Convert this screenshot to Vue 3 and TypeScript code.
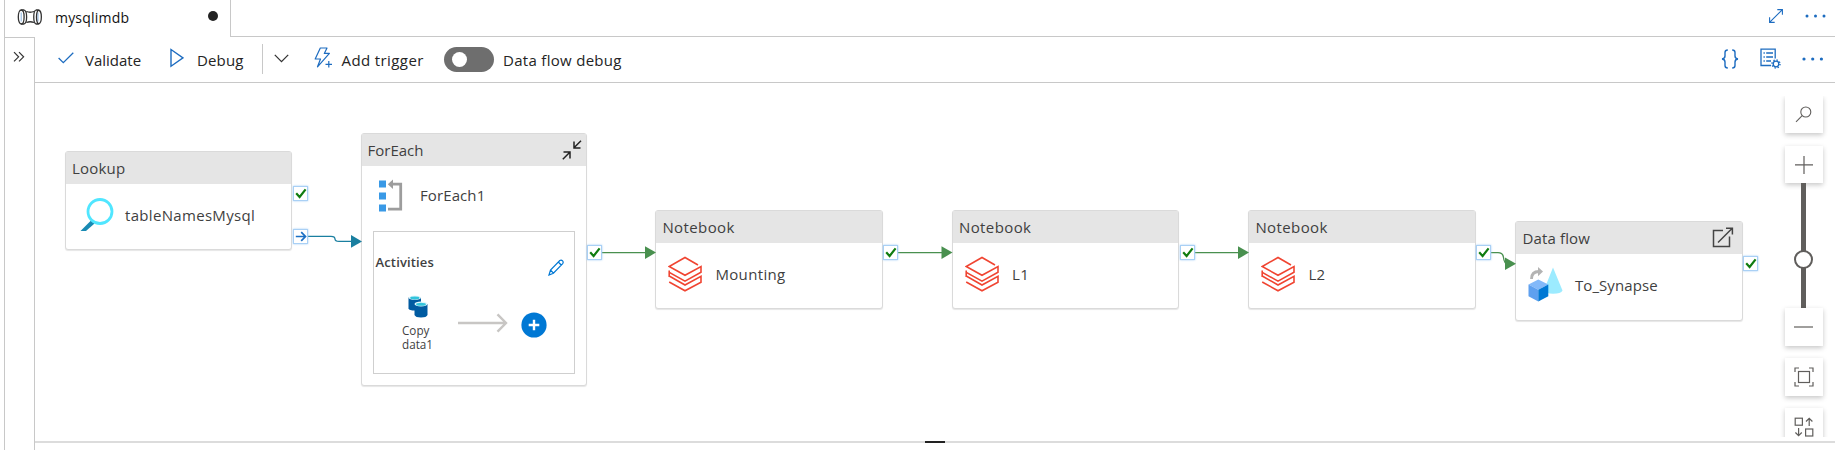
<script setup lang="ts">
type Kind = 'lookup' | 'foreach' | 'notebook' | 'dataflow'

interface Activity {
  id: number
  kind: Kind
  type: string
  name: string
  x: number
  y: number
  w: number
  h: number
}

interface Port {
  x: number
  y: number
  kind: 'success' | 'completion'
}

interface Link {
  d: string
  tipX: number
  tipY: number
  color: string
}

const activities: Activity[] = [
  { id: 1, kind: 'lookup', type: 'Lookup', name: 'tableNamesMysql', x: 30, y: 68.4, w: 227, h: 99 },
  { id: 2, kind: 'foreach', type: 'ForEach', name: 'ForEach1', x: 326, y: 50, w: 226, h: 253 },
  { id: 3, kind: 'notebook', type: 'Notebook', name: 'Mounting', x: 620.4, y: 127, w: 227.4, h: 99 },
  { id: 4, kind: 'notebook', type: 'Notebook', name: 'L1', x: 917, y: 127, w: 227.4, h: 99 },
  { id: 5, kind: 'notebook', type: 'Notebook', name: 'L2', x: 1213.4, y: 127, w: 227.4, h: 99 },
  { id: 6, kind: 'dataflow', type: 'Data flow', name: 'To_Synapse', x: 1480.4, y: 138, w: 227.4, h: 99.5 },
]

const ports: Port[] = [
  { x: 258, y: 103, kind: 'success' },
  { x: 258, y: 146, kind: 'completion' },
  { x: 552, y: 162, kind: 'success' },
  { x: 848.4, y: 162, kind: 'success' },
  { x: 1145, y: 162, kind: 'success' },
  { x: 1441.4, y: 162, kind: 'success' },
  { x: 1708.4, y: 173, kind: 'success' },
]

const teal = '#1a7fa0'
const green = '#49904f'

const links: Link[] = [
  { d: 'M273 153.3 H296 Q300 153.3 300 156 Q300 158.4 304 158.4 H317', tipX: 327, tipY: 158.4, color: teal },
  { d: 'M567 169.6 H612', tipX: 621, tipY: 169.6, color: green },
  { d: 'M863 169.6 H908', tipX: 917.5, tipY: 169.6, color: green },
  { d: 'M1160 169.6 H1205', tipX: 1214, tipY: 169.6, color: green },
  { d: 'M1456 169.6 H1463 Q1468 169.6 1468.5 174.5 Q1469 180.5 1473 181', tipX: 1481, tipY: 180.8, color: green },
]

const tip = (l: Link): string =>
  `M${l.tipX} ${l.tipY} l-11 -6.3 v12.6 z`
</script>

<template>
  <div class="app">
    <header class="tabs">
      <div class="tab">
        <svg class="pipe" width="26" height="18" viewBox="0 0 26 18">
          <path d="M4.2 4.5 V13.5 M21 4.5 V13.5" stroke="#8ab4e0" stroke-width="1" />
          <g fill="none" stroke="#333" stroke-width="1.3">
            <ellipse cx="4.2" cy="9" rx="2.9" ry="7" />
            <path d="M4.2 2 H7 C10.5 3 10.5 15 7 16 H4.2 M9.5 3.5 Q13 5 17 3.5 M9.5 14.5 Q13 13 17 14.5" />
            <path d="M19 2 C16 3 16 15 19 16 H21.5 M19 2 H21.5 C25.3 3 25.3 15 21.5 16 C18.8 14 18.8 4 21.5 2" />
          </g>
        </svg>
        <span class="tab-title">mysqlimdb</span>
        <span class="dirty"></span>
      </div>
      <div class="tab-tools">
        <svg width="16" height="16" viewBox="0 0 16 16" fill="none" stroke="#1d6cc0" stroke-width="1.1">
          <path d="M1.8 14.2 L14.2 1.8 M9.3 1.6 H14.4 V6.7 M1.6 9.3 V14.4 H6.7" />
        </svg>
        <svg width="22" height="4" viewBox="0 0 22 4" fill="#1d6cc0">
          <circle cx="2" cy="2" r="1.5" /><circle cx="10.5" cy="2" r="1.5" /><circle cx="19" cy="2" r="1.5" />
        </svg>
      </div>
    </header>

    <div class="body">
      <aside class="rail">
        <svg width="12" height="12" viewBox="0 0 12 12" fill="none" stroke="#333" stroke-width="1.2">
          <path d="M1 1.2 L5.6 5.8 L1 10.4 M6 1.2 L10.6 5.8 L6 10.4" />
        </svg>
      </aside>

      <main class="main">
        <div class="toolbar">
          <button class="cmd validate">
            <svg width="16" height="12" viewBox="0 0 16 12" fill="none" stroke="#1d6cc0" stroke-width="1.3">
              <path d="M.6 6 L5.3 10.6 L15.3 .7" />
            </svg>
            <span>Validate</span>
          </button>
          <button class="cmd debug">
            <svg width="14" height="20" viewBox="0 0 14 20" fill="none" stroke="#1d6cc0" stroke-width="1.4">
              <path d="M1 1.5 V18.2 L13 9.8 Z" />
            </svg>
            <span>Debug</span>
          </button>
          <span class="sep"></span>
          <svg class="chev" width="15" height="9" viewBox="0 0 15 9" fill="none" stroke="#333" stroke-width="1.3">
            <path d="M.8 .9 L7.5 7.6 L14.2 .9" />
          </svg>
          <button class="cmd trigger">
            <svg width="19" height="21" viewBox="0 0 19 21" fill="none" stroke="#1d6cc0" stroke-width="1.2">
              <path d="M6.3 1 H13 L10.3 6.4 H15.4 L3.5 19.8 L6.5 12 H1.2 Z" stroke-linejoin="round" />
              <path d="M14.8 14 V20.5 M11.5 17.3 H18" />
            </svg>
            <span>Add trigger</span>
          </button>
          <span class="toggle"><i></i></span>
          <span class="toggle-label">Data flow debug</span>
          <div class="right-tools">
            <svg width="18" height="20" viewBox="0 0 18 20" fill="none" stroke="#1d6cc0" stroke-width="1.4">
              <path d="M6.8 1 Q4 1 4 3.5 V7 Q4 9.7 1 10 Q4 10.3 4 13 V16.5 Q4 19 6.8 19 M11.2 1 Q14 1 14 3.5 V7 Q14 9.7 17 10 Q14 10.3 14 13 V16.5 Q14 19 11.2 19" />
            </svg>
            <svg width="21" height="21" viewBox="0 0 21 21" fill="none" stroke="#1d6cc0" stroke-width="1.3">
              <path d="M11 17.5 H1 V1.1 H15.2 V10.5" />
              <path d="M3.5 5 H4.8 M6.2 5 H13 M3.5 9 H4.8 M6.2 9 H13 M3.5 13 H4.8 M6.2 13 H11" />
              <circle cx="16" cy="16" r="2.8" />
              <circle cx="16" cy="16" r="4" stroke-width="1.4" stroke-dasharray="1.4 1.74" />
            </svg>
            <svg width="22" height="4" viewBox="0 0 22 4" fill="#1d6cc0">
              <circle cx="2" cy="2" r="1.6" /><circle cx="10.7" cy="2" r="1.6" /><circle cx="19.4" cy="2" r="1.6" />
            </svg>
          </div>
        </div>

        <section class="canvas">
          <article
            v-for="a in activities"
            :key="a.id"
            class="node"
            :class="a.kind"
            :style="{ left: a.x + 'px', top: a.y + 'px', width: a.w + 'px', height: a.h + 'px' }"
          >
            <div class="node-head">
              <span class="type">{{ a.type }}</span>
              <svg v-if="a.kind === 'foreach'" class="collapse" width="20" height="20" viewBox="0 0 20 20" fill="none" stroke="#222" stroke-width="1.5">
                <path d="M19 .8 L12 7.8 M12 1.5 V8 H18.5 M.8 19.2 L7.8 12.2 M1.5 12 H8 V18.5" />
              </svg>
              <svg v-if="a.kind === 'dataflow'" class="open" width="22" height="21" viewBox="0 0 22 21" fill="none" stroke="#444" stroke-width="1.5">
                <path d="M11 3.5 H1.5 V19.5 H17.5 V9.5 M6 15.5 L20 1.5 M14 1.2 H20.4 V7.6" />
              </svg>
            </div>

            <div class="node-body">
              <svg v-if="a.kind === 'lookup'" class="glyph" width="34" height="34" viewBox="0 0 34 34">
                <path d="M.5 33 L11 22.5 L14.5 25.5 L6 33 Z" fill="#198ab3" />
                <circle cx="20" cy="13.5" r="12" fill="#fff" stroke="#50e6ff" stroke-width="2.8" />
              </svg>
              <svg v-else-if="a.kind === 'foreach'" class="glyph" width="26" height="34" viewBox="0 0 26 34">
                <path d="M1 1.5 h7 v7 h-7 z M1 13.5 h7 v7 h-7 z M1 25.5 h7 v7 h-7 z" fill="#3999e6" />
                <path d="M14 5.2 H22.7 V30.2 H10" fill="none" stroke="#9d9d9d" stroke-width="2.8" />
                <path d="M9.8 5.2 L15 .5 V10 Z" fill="#9d9d9d" />
              </svg>
              <svg v-else-if="a.kind === 'notebook'" class="glyph" width="34" height="36" viewBox="0 0 34 36" fill="none" stroke="#f04532" stroke-width="1.6">
                <path d="M30 9 L17 1.5 L1.2 10.5 L17 19.3 L33 10.5 V16.3 L17 25.2 L1.2 16.3 V20 L17 29 L33 20.3 V26.3 L17 34.8 L1.2 26 M1.2 14.5 V21" />
              </svg>
              <svg v-else class="glyph" width="35" height="35" viewBox="0 0 35 35">
                <path d="M25 .5 L34.5 23.5 Q33 26.7 25 26.7 Q17.5 26.5 16 23 Z" fill="#9cebff" />
                <path d="M3.5 12 Q3.5 4.5 11 4.5" fill="none" stroke="#b3b3b3" stroke-width="2.8" />
                <path d="M10 0 L15 4.6 L10 9.2 Z" fill="#b3b3b3" />
                <path d="M.5 17.5 L10.3 12.5 L20.3 17.5 L10.3 22.8 Z" fill="#83b9f9" />
                <path d="M.5 17.5 L10.3 22.8 V34.5 L.5 29.3 Z" fill="#5ea0ef" />
                <path d="M20.3 17.5 L10.3 22.8 V34.5 L20.3 29.3 Z" fill="#0078d4" />
              </svg>
              <span class="name">{{ a.name }}</span>
            </div>

            <div v-if="a.kind === 'foreach'" class="inner">
              <div class="inner-head">
                <span>Activities</span>
                <svg width="16" height="17" viewBox="0 0 16 17" fill="none" stroke="#0078d4" stroke-width="1.2">
                  <path d="M1 16 L2.5 11 L11.8 1.5 Q13.3 .6 14.6 1.9 Q15.7 3.2 14.7 4.6 L5.4 14.2 Z M10.3 3 L13.2 6 M2.5 11 L5.4 14.2" />
                </svg>
              </div>
              <div class="inner-row">
                <div class="copy">
                  <svg width="20" height="23" viewBox="0 0 20 23">
                    <path d="M.5 2.5 H13 V12 Q10 15.5 7 15.5 Q1 15.5 .5 13.5 Z" fill="#005ba1" />
                    <ellipse cx="6.8" cy="2.7" rx="6.3" ry="2.1" fill="#dff6fb" />
                    <ellipse cx="6.8" cy="3" rx="4.7" ry="1.4" fill="#32c4dc" />
                    <path d="M6.5 9 H19.5 V20 Q18.5 22.5 13 22.5 Q7.5 22.5 6.5 20 Z" fill="#005ba1" />
                    <ellipse cx="13" cy="9" rx="6.5" ry="2.4" fill="#dff6fb" />
                    <ellipse cx="13" cy="9.3" rx="4.9" ry="1.5" fill="#32c4dc" />
                  </svg>
                  <span>Copy<br />data1</span>
                </div>
                <svg class="arrow" width="50" height="20" viewBox="0 0 50 20" fill="none" stroke="#c8c6c4" stroke-width="2.4">
                  <path d="M0 10 H47 M39.5 1.3 L48 10 L39.5 18.7" />
                </svg>
                <svg width="26" height="26" viewBox="0 0 26 26">
                  <circle cx="13" cy="13" r="12.6" fill="#0078d4" />
                  <path d="M13 7.7 V18.3 M7.7 13 H18.3" stroke="#fff" stroke-width="2.4" />
                </svg>
              </div>
            </div>
          </article>

          <svg class="links" width="1800" height="358" viewBox="0 0 1800 358">
            <g v-for="(l, i) in links" :key="i">
              <path :d="l.d" fill="none" :stroke="l.color" stroke-width="1.3" />
              <path :d="tip(l)" :fill="l.color" />
            </g>
          </svg>

          <span
            v-for="(p, i) in ports"
            :key="'p' + i"
            class="port"
            :style="{ left: p.x + 'px', top: p.y + 'px' }"
          >
            <svg v-if="p.kind === 'success'" width="12" height="11" viewBox="0 0 12 11" fill="none" stroke="#107c10" stroke-width="2.2">
              <path d="M1.2 5.3 L4.6 9 L10.6 1.4" />
            </svg>
            <svg v-else width="12" height="11" viewBox="0 0 12 11" fill="none" stroke="#1a6fc4" stroke-width="1.7">
              <path d="M.8 5.5 H10.5 M6.2 1.2 L10.5 5.5 L6.2 9.8" />
            </svg>
          </span>

          <div class="zoom">
            <span class="zbtn">
              <svg width="17" height="17" viewBox="0 0 17 17" fill="none" stroke="#605e5c" stroke-width="1.1">
                <circle cx="10.8" cy="6" r="5" /><path d="M7.2 9.7 L1 15.8" />
              </svg>
            </span>
            <span class="zbtn plus">
              <svg width="18" height="18" viewBox="0 0 18 18" stroke="#605e5c" stroke-width="1.2"><path d="M9 0 V18 M0 8.8 H18" /></svg>
            </span>
            <span class="track"><i></i></span>
            <span class="zbtn minus">
              <svg width="19" height="2" viewBox="0 0 19 2" stroke="#605e5c" stroke-width="1.2"><path d="M0 1 H19" /></svg>
            </span>
            <span class="zbtn fit">
              <svg width="20" height="20" viewBox="0 0 20 20" fill="none" stroke="#605e5c" stroke-width="1.2">
                <path d="M1 5 V1 H5 M15 1 H19 V5 M19 15 V19 H15 M5 19 H1 V15" />
                <rect x="4.5" y="4.5" width="11" height="11" />
              </svg>
            </span>
            <span class="zbtn arrange">
              <svg width="20" height="20" viewBox="0 0 20 20" fill="none" stroke="#605e5c" stroke-width="1.2">
                <rect x="1.2" y="1.2" width="7.2" height="7" /><rect x="11.6" y="12" width="7.2" height="7" />
                <path d="M15.2 9 V1.5 M12 4.5 L15.2 1.3 L18.4 4.5 M4.6 11 V18.5 M1.4 15.5 L4.6 18.7 L7.8 15.5" />
              </svg>
            </span>
          </div>
        </section>
        <footer class="splitter"><i></i></footer>
      </main>
    </div>
  </div>
</template>

<style>
html, body { margin: 0; background: #fff; overflow: hidden; }
</style>

<style scoped>
.app {
  width: 1835px;
  height: 450px;
  display: flex;
  flex-direction: column;
  background: #fff;
  color: #242424;
  font-family: "Open Sans", "Noto Sans", sans-serif;
  font-size: 15px;
  overflow: hidden;
}
svg { display: block; flex: none; }
.tabs { height: 37px; display: flex; flex: none; }
.tab {
  width: 225px;
  height: 37px;
  box-sizing: content-box;
  border-left: 1px solid #c8c8c8;
  border-right: 1px solid #c8c8c8;
  margin-left: 4px;
  display: flex;
  align-items: flex-start;
}
.pipe { margin: 8px 0 0 12px; }
.tab-title { width: 140px; margin: 8px 0 0 12px; font-size: 14px; line-height: 20px; font-weight: 500; letter-spacing: .2px; color: #111; }
.dirty { width: 10px; height: 10px; margin: 11px 0 0 12.5px; border-radius: 50%; background: #222; }
.tab-tools {
  flex: 1;
  border-bottom: 1px solid #c8c8c8;
  box-sizing: border-box;
  display: flex;
  justify-content: flex-end;
  align-items: center;
  gap: 21px;
  padding: 0 8px 4px 0;
}
.body { flex: 1; display: flex; min-height: 0; }
.rail {
  width: 31px;
  box-sizing: border-box;
  margin-left: 4px;
  border: 1px solid #c8c8c8;
  border-bottom: 0;
  padding: 13px 0 0 8px;
}
.main { flex: 1; min-width: 0; display: flex; flex-direction: column; }
.toolbar {
  height: 46px;
  flex: none;
  box-sizing: border-box;
  border-bottom: 1px solid #c8c8c8;
  display: flex;
  align-items: flex-start;
  line-height: 22px;
}
.cmd {
  border: 0;
  padding: 0;
  background: none;
  font: inherit;
  line-height: 22px;
  color: inherit;
  display: flex;
  white-space: nowrap;
}
.cmd span, .toggle-label { margin-top: 12px; }
.validate { margin-left: 23px; width: 112px; }
.validate svg { margin: 15px 11px 0 0; }
.debug { width: 92px; letter-spacing: .15px; }
.debug svg { margin: 11px 13px 0 0; }
.sep { width: 1px; height: 30px; margin-top: 7px; background: #c8c8c8; }
.chev { margin: 17px 0 0 11px; }
.trigger { margin-left: 25px; width: 130px; letter-spacing: .4px; }
.trigger svg { margin: 10px 8.5px 0 0; }
.toggle { width: 50px; height: 25px; margin-top: 10px; border-radius: 13px; background: #6e6e6e; display: flex; align-items: center; }
.toggle i { width: 15px; height: 15px; margin-left: 8px; border-radius: 50%; background: #fff; }
.toggle-label { margin-left: 9px; white-space: nowrap; letter-spacing: .3px; }
.right-tools { margin: 0 11px 0 auto; height: 43px; display: flex; align-items: center; gap: 21px; }
.canvas { position: relative; flex: 1; min-height: 0; overflow: hidden; color: #3f3f3f; }
.node {
  position: absolute;
  box-sizing: border-box;
  border: 1px solid #dadada;
  border-radius: 3px;
  background: #fff;
  box-shadow: 0 1px 1px #e6e6e6;
  display: flex;
  flex-direction: column;
}
.node-head {
  height: 32px;
  flex: none;
  box-sizing: border-box;
  background: #e5e5e5;
  padding: 0 5px 0 6px;
  display: flex;
  justify-content: space-between;
  line-height: 33px;
}
.lookup .type { letter-spacing: .2px; }
.notebook .type { letter-spacing: .4px; }
.dataflow .type { letter-spacing: .15px; }
.foreach .type { margin-left: -.5px; }
.collapse { margin-top: 6px; margin-right: -1px; }
.open { margin: 5px 3px 0 0; }
.node-body { display: flex; height: 66px; flex: none; }
.glyph { margin: 14px 0 0 14px; }
.foreach .glyph { margin: 13px 0 0 15.5px; }
.notebook .glyph { margin: 12.5px 0 0 12px; }
.dataflow .glyph { margin: 13px 0 0 11.5px; }
.name { margin: 18.5px 0 0 11px; line-height: 24px; letter-spacing: .32px; }
.foreach .name { margin: 17px 0 0 16.5px; letter-spacing: .1px; }
.notebook .name { margin: 19px 0 0 13px; letter-spacing: .35px; }
.dataflow .name { margin-left: 12px; letter-spacing: .1px; }
.inner {
  margin: -1px 11px 0 10.5px;
  height: 143px;
  box-sizing: border-box;
  border: 1px solid #cfcfcf;
}
.inner-head { display: flex; justify-content: space-between; padding: 20px 10px 0 2px; font-size: 13px; font-weight: 600; line-height: 20px; letter-spacing: .15px; }
.inner-head svg { margin-top: 7px; }
.inner-row { display: flex; align-items: flex-start; }
.copy { width: 56px; padding-left: 28.5px; font-size: 11.7px; line-height: 14px; }
.copy svg { margin: 19px 0 5px 6px; }
.arrow { margin: 37px 13px 0 -.5px; }
.inner-row > svg:last-child { margin-top: 36px; }
.links { position: absolute; left: 0; top: 0; }
.port {
  position: absolute;
  width: 15px;
  height: 15px;
  box-sizing: border-box;
  border: 1px solid #a9d0f5;
  background: #fff;
  box-shadow: 0 0 2px #9fcbf5;
  display: flex;
  align-items: center;
  justify-content: center;
}
.zoom { position: absolute; right: 12.5px; top: 13px; width: 38px; height: 341px; padding: 0 8px; margin-right: -8px; overflow: hidden; display: flex; flex-direction: column; align-items: center; }
.zbtn {
  width: 38px;
  height: 37px;
  flex: none;
  background: #fff;
  box-shadow: 0 2px 5px rgba(0, 0, 0, .22);
  display: flex;
  align-items: center;
  justify-content: center;
}
.plus { margin-top: 13px; }
.track { width: 5px; height: 125px; flex: none; background: #605e5c; display: flex; justify-content: center; }
.track i { width: 15px; height: 15px; flex: none; margin-top: 66.5px; border: 2px solid #605e5c; border-radius: 50%; background: #fff; }
.minus { height: 38px; }
.fit { height: 38px; margin-top: 12px; }
.arrange { height: 38px; margin-top: 12px; }
.splitter { height: 9px; flex: none; box-sizing: border-box; border-top: 2px solid #dcdcdc; display: flex; }
.splitter i { width: 20px; height: 2px; margin: -2px 0 0 890px; background: #222; }
</style>
